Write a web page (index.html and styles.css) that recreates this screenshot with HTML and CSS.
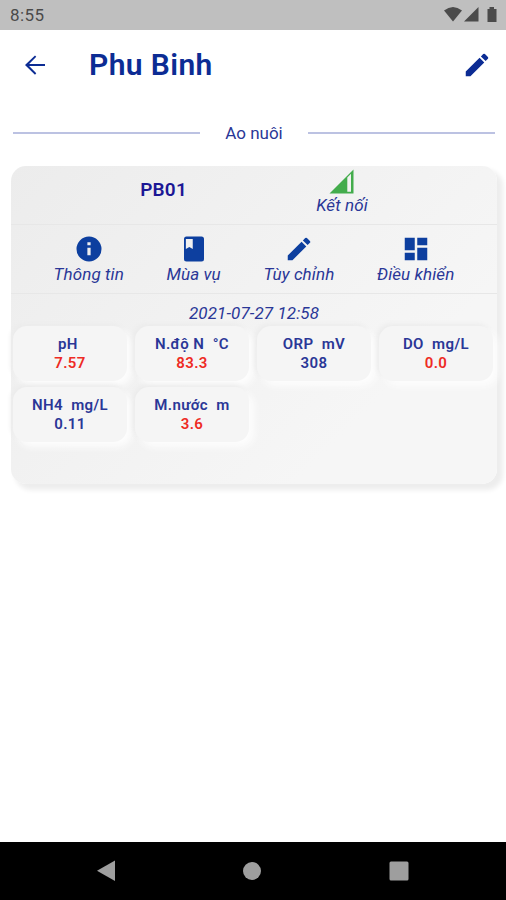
FILE: index.html
```html
<!DOCTYPE html>
<html lang="vi">
<head>
    <meta charset="UTF-8">
    <meta name="viewport" content="width=device-width, initial-scale=1.0">
    <title>Phu Binh</title>
    <link rel="stylesheet" href="styles.css">
</head>
<body>
    <div class="status-bar">
        <span class="clock">8:55</span>
        <svg class="status-icons" width="54" height="18" viewBox="0 0 54 18">
            <path d="M0 4.5 Q9 -2.500 18 4.500 L9 15.500 Z"/>
            <path d="M34.500 1 V15.500 H20 Z"/>
            <path d="M43.500 3 H45.500 V1 H50 V3 H52.500 V16 H43.500 Z"/>
        </svg>
    </div>

    <header class="app-bar">
        <svg class="icon back" viewBox="0 0 24 24"><path d="M20 11.200H7.300l5.700-5.790L12 4.300l-8 7.700 8 7.700 1-1.110L7.300 12.800H20z"/></svg>
        <h1>Phu Binh</h1>
        <svg class="icon edit" viewBox="0 0 24 24"><path d="M3 17.250V21h3.750L17.810 9.940l-3.750-3.750L3 17.250zM20.710 7.040a1 1 0 0 0 0-1.410l-2.340-2.340a1 1 0 0 0-1.410 0l-1.830 1.830 3.750 3.750 1.830-1.830z"/></svg>
    </header>

    <main>
        <div class="section-title"><span>Ao nuôi</span></div>

        <section class="pond">
            <div class="pond-head">
                <h2>PB01</h2>
                <div class="signal">
                    <svg width="25" height="25" viewBox="0 0 25 25"><path fill-rule="evenodd" d="M24.500 0.500V24.500H0.500zM18.300 8.500V22.800H22V4.800z"/></svg>
                    <span>Kết nối</span>
                </div>
            </div>

            <div class="actions">
                <div class="action">
                    <svg class="icon" viewBox="0 0 24 24"><path d="M12 2a10 10 0 1 0 0 20 10 10 0 0 0 0-20zm1.300 15h-2.600v-6h2.600v6zm0-8h-2.600V6.600h2.600V9z"/></svg>
                    <span>Thông tin</span>
                </div>
                <div class="action">
                    <svg class="icon" viewBox="0 0 24 24"><path d="M18 2H6a2 2 0 0 0-2 2v16a2 2 0 0 0 2 2h12a2 2 0 0 0 2-2V4a2 2 0 0 0-2-2zM5.500 4h5.500v8l-2.750-1.650L5.500 12V4z"/></svg>
                    <span>Mùa vụ</span>
                </div>
                <div class="action">
                    <svg class="icon" viewBox="0 0 24 24"><path d="M3 17.250V21h3.750L17.810 9.940l-3.750-3.750L3 17.250zM20.710 7.040a1 1 0 0 0 0-1.410l-2.340-2.340a1 1 0 0 0-1.410 0l-1.830 1.830 3.750 3.750 1.830-1.830z"/></svg>
                    <span>Tùy chỉnh</span>
                </div>
                <div class="action">
                    <svg class="icon" viewBox="0 0 24 24"><path d="M3 13h8V3H3v10zm0 8h8v-6H3v6zm10 0h8V11h-8v10zm0-18v6h8V3h-8z"/></svg>
                    <span>Điều khiển</span>
                </div>
            </div>

            <div class="updated">2021-07-27 12:58</div>

            <div class="sensors">
                <div class="sensor"><span>pH&nbsp;</span><b class="alert">7.57</b></div>
                <div class="sensor"><span>N.độ N&nbsp; °C</span><b class="alert">83.3</b></div>
                <div class="sensor"><span>ORP&nbsp; mV</span><b>308</b></div>
                <div class="sensor"><span>DO&nbsp; mg/L</span><b class="alert">0.0</b></div>
                <div class="sensor"><span>NH4&nbsp; mg/L</span><b>0.11</b></div>
                <div class="sensor"><span>M.nước&nbsp; m</span><b class="alert">3.6</b></div>
            </div>
        </section>
    </main>

    <nav class="nav-bar">
        <svg width="18" height="22" viewBox="0 0 18 22"><path d="M18 0.500V21L0 10.800z"/></svg>
        <svg width="18" height="18" viewBox="0 0 18 18"><circle cx="9" cy="9" r="9"/></svg>
        <svg width="20" height="20" viewBox="0 0 20 20"><rect x="0.500" y="0.500" width="19" height="19" rx="1.500"/></svg>
    </nav>
</body>
</html>
```

FILE: styles.css
```css
:root {
    --primary: #0d3f9f;
    --navy: #2a3797;
    --danger: #ee2b24;
}

* {
    box-sizing: border-box;
}

body {
    margin: 0;
    height: 900px;
    display: flex;
    flex-direction: column;
    overflow: hidden;
    background: #fff;
    color: var(--navy);
    font-family: Roboto, "Noto Sans", sans-serif;
}

h1,
h2 {
    margin: 0;
    font-weight: 500;
}

svg {
    display: block;
    flex: none;
}

.icon {
    width: 30px;
    height: 30px;
    fill: var(--primary);
}

/* Status bar */
.status-bar {
    height: 30px;
    flex: none;
    display: flex;
    align-items: center;
    justify-content: space-between;
    padding: 0 8px 0 10px;
    background: #bfbfbf;
    color: #4a4a4a;
}

.clock {
    font-size: 17px;
    letter-spacing: 0.4px;
}

.status-icons {
    fill: #4b4b4b;
}

/* App bar */
.app-bar {
    height: 70px;
    flex: none;
    display: flex;
    align-items: center;
    padding: 0 14px 0 20px;
}

.app-bar h1 {
    flex: 1;
    margin-left: 39px;
    font-size: 30px;
    line-height: 36px;
    font-weight: 600;
    letter-spacing: 0.4px;
    color: #0c2c94;
}

.app-bar .edit,
.app-bar .back {
    fill: #0c2c94;
}

main {
    flex: 1;
    padding: 20px 9px 0 11px;
}

.section-title {
    display: flex;
    align-items: center;
    height: 26px;
    padding: 0 2px;
    gap: 25px;
    font-size: 17px;
}

.section-title::before,
.section-title::after {
    content: "";
    flex: 1;
    height: 2px;
    background: #bcc2e2;
}

/* Pond card */
.pond {
    height: 318px;
    margin-top: 20px;
    border-radius: 15px;
    background: linear-gradient(135deg, #ececec, #f6f6f6 75%);
    box-shadow: 5px 5px 5px 1px #ededed;
}

.pond-head,
.actions {
    display: flex;
    justify-content: space-evenly;
    border-bottom: 1px solid #e7e7e7;
    font-size: 17px;
    font-style: italic;
}

.pond-head {
    height: 59px;
}

.pond-head h2 {
    padding-top: 12px;
    font-size: 19px;
    line-height: 24px;
    font-style: normal;
    font-weight: 600;
    letter-spacing: 0.2px;
    color: #1c1795;
}

.signal,
.action {
    display: flex;
    flex-direction: column;
    align-items: center;
    line-height: 20px;
    letter-spacing: 0.1px;
}

.signal {
    padding-top: 3px;
}

.signal svg {
    fill: #43ac4c;
}

.signal span {
    margin-top: 1px;
}

.actions {
    height: 69px;
    padding-top: 9px;
}

.updated {
    height: 32px;
    padding-top: 9px;
    line-height: 20px;
    font-size: 17px;
    font-style: italic;
    letter-spacing: 0.1px;
    text-align: center;
}

.sensors {
    display: grid;
    grid-template-columns: repeat(4, 114px);
    grid-auto-rows: 55px;
    gap: 6px 8px;
    padding-left: 2px;
}

.sensor {
    display: flex;
    flex-direction: column;
    align-items: center;
    padding-top: 9px;
    border-radius: 14px;
    background: #f5f5f5;
    box-shadow: 5px 5px 7px #fdfdfd, -2px -2px 5px #ebebeb;
    font-size: 15px;
    font-weight: 600;
    line-height: 19px;
    letter-spacing: 0.4px;
}

.sensor b {
    font-weight: 600;
}

.sensor .alert {
    color: var(--danger);
}

/* Android navigation */
.nav-bar {
    height: 58px;
    flex: none;
    display: flex;
    align-items: center;
    justify-content: space-between;
    padding: 0 97px;
    background: #000;
    fill: #9e9e9e;
}
```
